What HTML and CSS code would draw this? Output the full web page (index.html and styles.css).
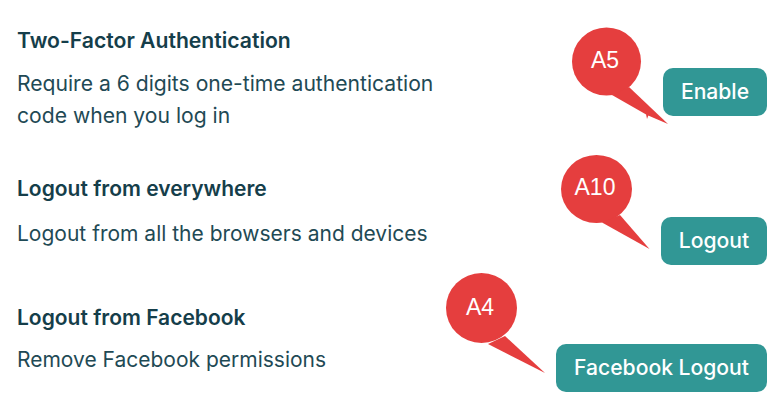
FILE: index.html
```html
<!DOCTYPE html>
<html lang="en">
<head>
<meta charset="utf-8">
<title>Security settings</title>
<link rel="stylesheet" href="styles.css">
</head>
<body>
<main class="list">
  <section class="row row-first">
    <div class="info">
      <h2 class="title">Two-Factor Authentication</h2>
      <p class="desc">Require a 6 digits one-time authentication code when you log in</p>
    </div>
    <button class="btn btn-first">Enable</button>
  </section>
  <section class="row row-second">
    <div class="info">
      <h2 class="title">Logout from everywhere</h2>
      <p class="desc">Logout from all the browsers and devices</p>
    </div>
    <button class="btn btn-second">Logout</button>
  </section>
  <section class="row row-third">
    <div class="info">
      <h2 class="title">Logout from Facebook</h2>
      <p class="desc">Remove Facebook permissions</p>
    </div>
    <button class="btn btn-third">Facebook Logout</button>
  </section>
</main>
<svg class="pin pin-a5" width="100" height="110" viewBox="0 0 100 110" aria-hidden="true">
  <ellipse cx="34.5" cy="34.5" rx="34.5" ry="34"/>
  <path d="M57 60 L96 97 L75 88 L40 68 Z"/>
  <path d="M74 87 L75 92 L76.5 88 Z"/>
</svg>
<span class="pin-label label-a5">A5</span>
<svg class="pin pin-a10" width="100" height="110" viewBox="0 0 100 110" aria-hidden="true">
  <ellipse cx="35.5" cy="34" rx="35.5" ry="34"/>
  <path d="M59 60 L88.5 94 L41 67.5 Z"/>
</svg>
<span class="pin-label label-a10">A10</span>
<svg class="pin pin-a4" width="110" height="110" viewBox="0 0 110 110" aria-hidden="true">
  <ellipse cx="35.5" cy="35" rx="35.5" ry="35"/>
  <path d="M59 63 L99 100 L42 71 Z"/>
</svg>
<span class="pin-label label-a4">A4</span>
</body>
</html>
```
FILE: styles.css
```css
* { box-sizing: border-box; }
html, body { margin: 0; padding: 0; background: #fff; }
body { width: 782px; height: 409px; overflow: hidden; font-family: "Inter", "Liberation Sans", sans-serif; color: #234e52; position: relative; }
.list { display: flex; flex-direction: column; padding: 0 15px 0 17px; }
.row { display: flex; justify-content: space-between; align-items: flex-start; padding-top: 26px; }
.row-first { height: 148px; }
.row-second { height: 128px; }
.row-third { height: 133px; padding-top: 27px; }
.info { width: 430px; }
.title { margin: 0 0 12px; font-size: 21px; line-height: 30px; font-weight: 600; color: #153e4a; }
.desc { margin: 0; font-size: 21px; line-height: 32px; font-weight: 400; color: #1f4a55; }
.row-first .title { font-size: 21.15px; }
.row-first .desc { font-size: 21.12px; }
.row-second .title { margin-bottom: 14px; }
.row-third .title { margin-bottom: 11px; }
.btn { border: 0; border-radius: 10px; height: 48px; background: #319795; color: #fff; font: 500 21.12px/24px "Inter", "Liberation Sans", sans-serif; padding: 0; }
.btn-first { margin-top: 42px; width: 104px; }
.btn-second { margin-top: 43px; width: 106px; }
.btn-third { margin-top: 41px; width: 211px; }
.pin { position: absolute; fill: #e53e3e; }
.pin-a5 { left: 572px; top: 26.5px; }
.pin-a10 { left: 561px; top: 155px; }
.pin-a4 { left: 446px; top: 273px; }
.pin-label { position: absolute; width: 70px; text-align: center; color: #fff; font: 400 23px/28px "Liberation Sans", sans-serif; }
.label-a5 { left: 570px; top: 46px; }
.label-a10 { left: 560px; top: 173px; }
.label-a4 { left: 445px; top: 293px; }
```
